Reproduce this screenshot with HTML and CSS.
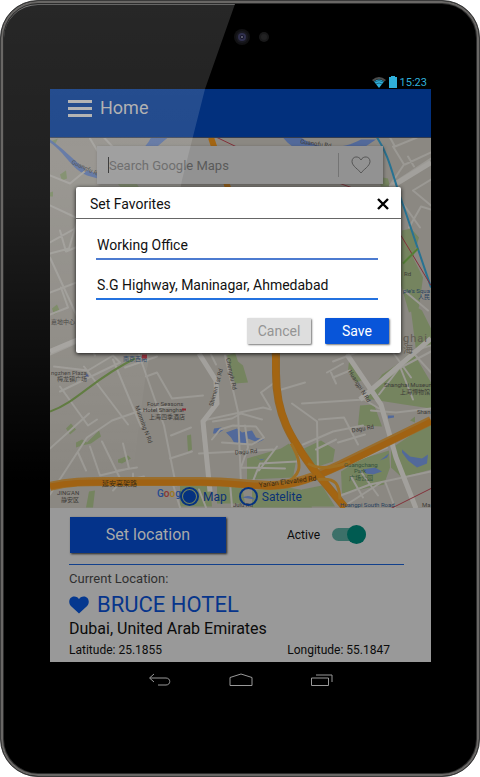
FILE: index.html
```html
<!DOCTYPE html>
<html lang="en">
<head>
<meta charset="utf-8">
<meta name="viewport" content="width=device-width, initial-scale=1">
<title>Home</title>
<link rel="stylesheet" href="styles.css">
</head>
<body>
<div class="device">
  <div class="camera">
    <svg width="40" height="20" viewBox="0 0 40 20" aria-hidden="true">
      <circle cx="12" cy="10" r="8" fill="#111113"/><circle cx="12" cy="10" r="6" fill="#191920"/><circle cx="12" cy="10" r="4" fill="#30304e"/><circle cx="12" cy="10" r="2" fill="#151527"/><circle cx="12" cy="10" r="1" fill="#707080"/>
      <circle cx="34" cy="10" r="5" fill="#19191a"/><circle cx="34" cy="10" r="3" fill="#222223"/>
    </svg>
  </div>
  <div class="status">
    <svg width="14" height="12" viewBox="0 0 14 12" aria-hidden="true"><path d="M0 4Q7-2 14 4L12.500 5.500Q7 1 1.500 5.500Z" fill="#4b4c4c"/><path d="M2 5.500Q7 1.500 12 5.500L7 12Z" fill="#2fb0dc"/><path d="M2.500 6Q7 3 11.500 6M4 8Q7 6 10 8" fill="none" stroke="#0c3747" stroke-width=".6"/></svg>
    <svg width="8" height="12" viewBox="0 0 8 12" aria-hidden="true"><path d="M2 0h4v1h2v11H0V1h2z" fill="#2fb0dc"/></svg>
    <span>15:23</span>
  </div>
  <main class="screen">
    <header class="appbar">
      <button class="menu" aria-label="Menu"><span></span><span></span><span></span></button>
      <h1>Home</h1>
    </header>
    <section class="map">
      <svg class="map-art" viewBox="50 137 381 371" preserveAspectRatio="xMidYMid slice" aria-hidden="true">
        <rect x="50" y="137" width="381" height="371" fill="#8b8882"/>
        <g fill="#75845f">
          <path d="M50 141l8-3-3 6zM60 174l6-4 1 8-5 2zM50 192l3-1v5h-3zM52 308l5-4 3 7-6 3zM66 428l5-5 5 6-6 5zM76 442l6-3 5 3 12-12 2 6-10 7-9 2-6 2zM118 459l10-4 3 3-9 5-4-1zM89 491l6-1-2 17h-7z"/>
          <path d="M227 355l8-3 3 9 5 4 5 17-13 1zM187 435l4-1 1 15-4 2zM247 458l34-10 8-5 8 12-4 22-46 2zM180 485l30-1 2 22h-32zM217 485h25l3 18h-28zM252 490l30-4 24 4 6 17h-60z"/>
          <path d="M402 230l9-2 8 9-6 20 10 20-4 30-10 5-9-31zM410 302l12 8 9 18v18l-15 4zM349 361l7 3 8 15-8 3-8-12zM382 374l18-12 12-12 19 32v26l-27-4-38-6zM360 405l14-1 8 22-24-1zM304 448l17-8 14 9-2 12-18 6zM391 448l40-27v48l-29 8-11-10zM341 471l19-12 29-9 1 17-6 17-42 9zM302 489l20-4 13 21h-37zM410 420l5-4v6zM115 180h20l4 7h-18zM378 176l10 2 2 8h-9z"/>
        </g>
        <g fill="#52699a">
          <path d="M50 142c16 11 21 26 37 33l18 5 25-18c20-7 29-18 38-25h-17c-5 11-15 16-23 23L98 173c-18-3-26-19-48-34z"/>
          <path d="M283 137c17 22 55 24 81 10l12-8h-15c-20 11-43 10-60-2z"/>
          <path d="M402 449l8 7 12 2 6-4-1 9-10 4-9-7-6-8zM363 469l12-2 7 4-9 3-7-1zM380 460l9-7-2 4zM388 415h6v2l-6 1zM214 428l7-1 3 2-6 4h-5zM226 432l11-4 5 4 10-2 4 7 8 2-6 3-10-4-2 6-12-2-3-5zM255 456l5 3 5-1-4 2zM242 497q8-4 13 2z"/>
        </g>
        <g fill="none" stroke="#9b9994" stroke-width="2" stroke-linecap="round" stroke-linejoin="round">
          <path d="M50 175l20 8 17-14M90 138l9 15 12 3M104 137l14 15M50 205l28 13-9 30-19 5M60 230l6 21 29-12M50 242l45-25M50 257l45 98M50 292l45-17M61 287l7 20-18 7M50 354l45-20M54 366l34 4 25-15 7 7-60 29M60 386l28 39 9-6M84 366l44 58M50 448l39-35M50 494l37-57 25-17 26-9 33-6M113 359l28 67M139 354l25 71 12 60M125 367l32-11M146 376l11-4 15 26 31-3M113 490l8-9 23-5M78 452l8 18M90 446l10 29 29-7-6-25M102 441l21 43M133 473v10M118 470l19-3"/>
          <path d="M199 355l18 26 1 21-16 22 7 64M203 420l60-13 8 2M225 355l13 56 3 73M199 453l74-4M213 421l19-3 9-5 21 6M212 439l8-10 13-4 23 1 8 11-12 7-30-2M245 425l3 22-7 20 44 1M252 483l8-20 37-2M259 470l18-24M170 458l22-7M171 435l20-8M270 407l-9-15 15-11M211 354l5 10M173 484l7 23M199 489l7 18M230 482l2 24M278 390l27-8"/>
          <path d="M292 403l25 18 1 50M302 403l62-4 15 9M319 419l25-2 14 27M303 444l30-13 30-6M338 442l27-8M316 449l20-10M333 361l26-10M347 354l34 50 15 50 20 53M360 398l55-48 16-5M371 410l25 2 35-4M379 394l20-26 32-17M400 366l13 33M393 352l18 25M411 350l20 22M327 372l16-9M333 377l17-7M331 372l5 11M343 466l44-19M338 496l32-12 61-13M342 507l39-25M360 470l18 25M385 481l10 26M403 478l13 29M351 476l12 21M404 290l24 20M431 205l-18-15 18-11M390 137l5 9 22-9M393 146l11 18-14 21 30 42M390 185l41-27M405 164l26-12M414 166l-6-10M409 227l12-21 10 3"/>
        </g>
        <g fill="none" stroke="#a2a09c" stroke-width="5"><path d="M50 351l45-19M199 353l17 27 1 23-14 18 7 70M347 354l34 50 15 53 20 51M360 399l71-61M390 187l41-25"/></g>
        <g stroke-linecap="butt" stroke-linejoin="round" fill="none">
          <path d="M50 486c19-5 36-5 56-5h94c30 0 45 3 69 4 25 0 46-9 72-21l90-44" stroke="#9a6e2d" stroke-width="9"/>
          <path d="M50 486c19-4 36-4 56-4h94c30 0 45 3 69 4 25 0 46-9 72-21l90-44" stroke="#a06213" stroke-width="6"/>
          <path d="M276 350v23c0 42 15 65 36 94l33 40" stroke="#98651f" stroke-width="8"/>
          <path d="M211 137l8 24 12 35 42 128 3 49c0 39 15 65 36 94l33 40" stroke="#a36512" stroke-width="6"/>
          <path d="M291 443c15 25 7 33-7 41M308 463c14 8 30 3 42-2M318 479c19-2 21 5 22 20" stroke="#9e7025" stroke-width="3"/>
          <path d="M50 411c28-10 42-32 85-53" stroke="#5c783b" stroke-width="2"/>
          <path d="M377 137c13 19 16 41 27 70l27 80" stroke="#277292" stroke-width="2"/>
          <path d="M217 137l23 11M340 183l17 6M401 235l30 50M391 508l40-20" stroke="#83303a" stroke-width="1"/>
          <path d="M403 263l15-15" stroke="#547f36" stroke-width="2"/>
        </g>
        <g class="map-labels">
          <text x="71" y="163" transform="rotate(25 71 163)">Guangfu Rd</text>
          <text x="300" y="143" transform="rotate(8 300 143)">Guangfu Rd</text>
          <text x="51" y="374">ngzhen Plaza</text><text x="57" y="380">梅龙镇广场</text>
          <text class="station" x="123" y="360">南京西路</text>
          <text x="147" y="405">Four Seasons</text><text x="143" y="411">Hotel Shanghai</text><text x="149" y="418">上海四季酒店</text>
          <text x="135" y="406" transform="rotate(70 135 406)">Maoming N Rd</text>
          <text x="213" y="406" transform="rotate(-75 213 406)">Shimen 1st Rd</text>
          <text x="226" y="358" transform="rotate(78 226 358)">Chengdu Rd</text>
          <text x="235" y="454" transform="rotate(-4 235 454)">Dagu Rd</text>
          <text x="352" y="432" transform="rotate(-10 352 432)">Dagu Rd</text>
          <text x="348" y="371" transform="rotate(58 348 371)">Huangpi N Rd</text>
          <text x="384" y="386">Shanghai Museum</text><text x="400" y="393">上海博物馆</text><text x="417" y="413">Shan</text>
          <text class="park" x="344" y="466">Guangchang</text><text class="park" x="354" y="472">Park</text><text class="park" x="349" y="479">广场公园</text>
          <text class="road" x="102" y="485">延安高架路</text>
          <text class="road" x="259" y="487" transform="rotate(-7 259 487)">Yan'an Elevated Rd</text>
          <text x="57" y="494">JING'AN</text><text x="61" y="501">静安区</text>
          <text class="station" x="340" y="506">Huangpi South Road</text><text x="422" y="506">Ma</text><text x="233" y="506">Julu Rd</text>
          <text x="51" y="323">嘉地中心</text><text x="404" y="275">Rd</text><text class="station" x="403" y="292">ple's Squa</text><text class="station" x="418" y="298">人民</text>
          <text class="city" x="403" y="341">ghai</text><text class="city-cn" x="403" y="352">海</text>
          <text class="google" x="157" y="496"><tspan fill="#244a91">G</tspan><tspan fill="#8a3431">o</tspan><tspan fill="#9e771d">o</tspan><tspan fill="#244a91">g</tspan></text>
        </g>
        <g fill="#8f2732"><rect x="142" y="354" width="5" height="4"/><rect x="182" y="408" width="4" height="2"/><path d="M85 376l2-3 2 3z" fill="#445386"/></g>
      </svg>
      <form class="search">
        <input type="text" aria-label="Search Google Maps" placeholder="Search Google Maps">
        <button type="button" aria-label="Favorites"><svg width="20" height="18" viewBox="0 0 20 18"><path d="M10 17C8 14 1 10 1 5.500C1 0 8-.5 10 4c2-4.500 9-4 9 1.500C19 10 12 14 10 17z" fill="none" stroke="#555" stroke-width="1"/></svg></button>
      </form>
      <div class="types">
        <label><input type="radio" name="type" checked>Map</label>
        <label><input type="radio" name="type">Satelite</label>
      </div>
    </section>
    <section class="panel">
      <div class="actions">
        <button class="set-location">Set location</button>
        <label class="active">Active<input type="checkbox" checked></label>
      </div>
      <p class="caption">Current Location:</p>
      <h2><svg width="20" height="18" viewBox="0 0 21 18" aria-hidden="true"><path d="M10.500 18L2 10C-1.500 6 .5 0 5.500 0c2.500 0 4 1 5 3 1-2 2.500-3 5-3 5 0 7 6 3.500 10z" fill="#05388f"/></svg>BRUCE HOTEL</h2>
      <p class="place">Dubai, United Arab Emirates</p>
      <div class="coords"><span>Latitude: 25.1855</span><span>Longitude: 55.1847</span></div>
    </section>
    <section class="dialog" role="dialog" aria-labelledby="dialog-title">
      <header><h2 id="dialog-title">Set Favorites</h2><button aria-label="Close"><svg width="12" height="12" viewBox="0 0 12 12"><path d="M1 1l10 10M11 1L1 11" stroke="#000" stroke-width="2.400"/></svg></button></header>
      <form>
        <input type="text" aria-label="Name" value="Working Office">
        <input type="text" aria-label="Address" value="S.G Highway, Maninagar, Ahmedabad">
        <div class="buttons"><button type="button" class="cancel">Cancel</button><button type="button" class="save">Save</button></div>
      </form>
    </section>
  </main>
  <nav class="keys">
    <button aria-label="Back"><svg width="24" height="14" viewBox="0 0 24 14"><path d="M6 1L1.500 5L6 9M2 5h16c5 0 5 7 0 7h-8" fill="none" stroke="#999"/></svg></button>
    <button aria-label="Home"><svg width="24" height="14" viewBox="0 0 24 14"><path d="M1 12.500v-8L12 1l11 3.500v8z" fill="none" stroke="#999"/></svg></button>
    <button aria-label="Recent apps"><svg width="24" height="14" viewBox="0 0 24 14"><path d="M1.500 5h17v7.500h-17zM6 2h16v7" fill="none" stroke="#999"/></svg></button>
  </nav>
  <div class="gloss"></div>
</div>
</body>
</html>
```
FILE: styles.css
```css
* { box-sizing: border-box; }
body { margin: 0; background: #fff; font-family: Roboto, "Noto Sans CJK SC", sans-serif; color: #0b0b0b; }
h1, h2, p { margin: 0; font-weight: 400; }
button { border: 0; padding: 0; background: none; font: inherit; }
input { font: inherit; color: inherit; margin: 0; }
svg { display: block; }

.device {
  position: relative;
  min-height: 100vh;
  padding: 28px 48px 0 49px;
  border: 1px solid #3a3a3a;
  border-radius: 38px;
  background: #000;
  box-shadow: inset 0 0 0 2px #696765, inset 0 0 0 3px #2c2c2c;
}
.camera { display: flex; justify-content: center; height: 20px; padding-left: 18px; }
.camera svg { flex: none; margin-top: -2px; }
.status { display: flex; justify-content: flex-end; align-items: center; gap: 3px; height: 16px; margin-top: 24px; padding: 2px 4px 0 0; color: #2fb0dc; font-size: 11px; }

.screen { position: relative; background: #999; }
.appbar { display: flex; align-items: center; gap: 8px; height: 48px; padding: 0 18px 10px; background: #02307d; color: #a6a6a6; }
.menu { display: flex; flex-direction: column; gap: 4px; width: 24px; }
.menu span { height: 3px; background: #a9a9a9; }
.appbar h1 { font-size: 18px; line-height: 24px; }

.map { position: relative; height: 371px; border-top: 1px solid #333c50; }
.map-art { width: 100%; height: 100%; }
.map-labels { font-size: 6px; fill: #3c3a37; }
.map-labels .station { fill: #263f60; }
.map-labels .park { fill: #34513c; }
.map-labels .road { font-size: 7px; fill: #392a14; }
.map-labels .city { font-size: 11px; letter-spacing: 1px; fill: #605b52; }
.map-labels .city-cn { font-size: 10px; fill: #605b52; }
.map-labels .google { font-size: 10px; font-weight: 500; }

.search { position: absolute; top: 8px; left: 47px; right: 48px; height: 38px; display: flex; align-items: center; background: #929292; box-shadow: 1px 1px 3px #3338; }
.search input { flex: 1; min-width: 0; height: 16px; margin-left: 11px; padding: 0; border: 0; border-left: 1px solid #222; background: none; font-size: 13px; outline: 0; }
.search input::placeholder { color: #5a5a5a; opacity: 1; }
.search button { display: flex; justify-content: center; align-items: center; width: 45px; height: 24px; border-left: 1px solid #747474; }

.types { position: absolute; left: 130px; bottom: 2px; display: flex; gap: 12px; font-size: 12px; color: #0b3275; }
.types label { display: flex; align-items: center; gap: 4px; }
.types input { appearance: none; width: 19px; height: 19px; border: 2px solid #05327f; border-radius: 50%; }
.types input:checked { background: #05327f; background-clip: content-box; padding: 1px; }

.panel { padding: 9px 27px 2px 19px; }
.actions { display: flex; align-items: center; justify-content: space-between; height: 48px; padding: 0 38px 12px 1px; border-bottom: 1px solid #12408c; }
.set-location { width: 156px; height: 36px; background: #04338a; color: #a9a9a9; box-shadow: 1px 1px 2px #222; font-size: 16px; }
.active { display: flex; align-items: center; gap: 12px; font-size: 12px; }
.active input { appearance: none; display: flex; align-items: center; width: 34px; height: 13px; border-radius: 7px; background: #3c7069; }
.active input::before { content: ""; width: 19px; height: 19px; margin-left: 15px; border-radius: 50%; background: #005b51; }
.caption { margin-top: 5px; font-size: 13px; line-height: 18px; color: #303030; }
.panel h2 { display: flex; align-items: center; gap: 8px; margin-top: 4px; font-size: 22px; line-height: 26px; color: #07358b; }
.place { font-size: 16px; line-height: 22px; }
.coords { display: flex; justify-content: space-between; padding-right: 14px; font-size: 12px; line-height: 20px; }

.dialog { position: absolute; z-index: 3; top: 98px; left: 26px; right: 30px; border-radius: 2px; background: #fff; box-shadow: 0 1px 4px #111; color: #111; }
.dialog header { display: flex; align-items: center; justify-content: space-between; height: 32px; padding: 2px 12px 0 14px; border-bottom: 1px solid #666; }
.dialog h2 { font-size: 14px; line-height: 20px; }
.dialog form { display: flex; flex-direction: column; padding: 12px 12px 9px 20px; }
.dialog form > input { height: 29px; margin: 0 11px 11px 0; padding: 0 1px; border: 0; border-bottom: 2px solid #4c7bd0; background: none; font-size: 14px; outline: 0; }
.dialog form > input + input { border-color: #2472df; }
.buttons { display: flex; justify-content: flex-end; gap: 14px; margin-top: 7px; }
.buttons button { width: 64px; height: 26px; border-radius: 1px; font-size: 14px; box-shadow: 1px 1px 2px #777; }
.cancel { background: #dedede; color: #949494; }
.save { background: #0855d9; color: #fff; }

.keys { display: flex; justify-content: center; gap: 57px; padding-top: 11px; }
.gloss { position: absolute; z-index: 2; inset: 3px; pointer-events: none; border-top: 1px solid #fff6; border-radius: 34px; background: linear-gradient(#ffffff27, #ffffff20 180px, #fff0 480px); clip-path: polygon(0 0, 231px 0, 201px 85px, 178px 176px, 141px 376px, 122px 520px, 0 520px); }
```
